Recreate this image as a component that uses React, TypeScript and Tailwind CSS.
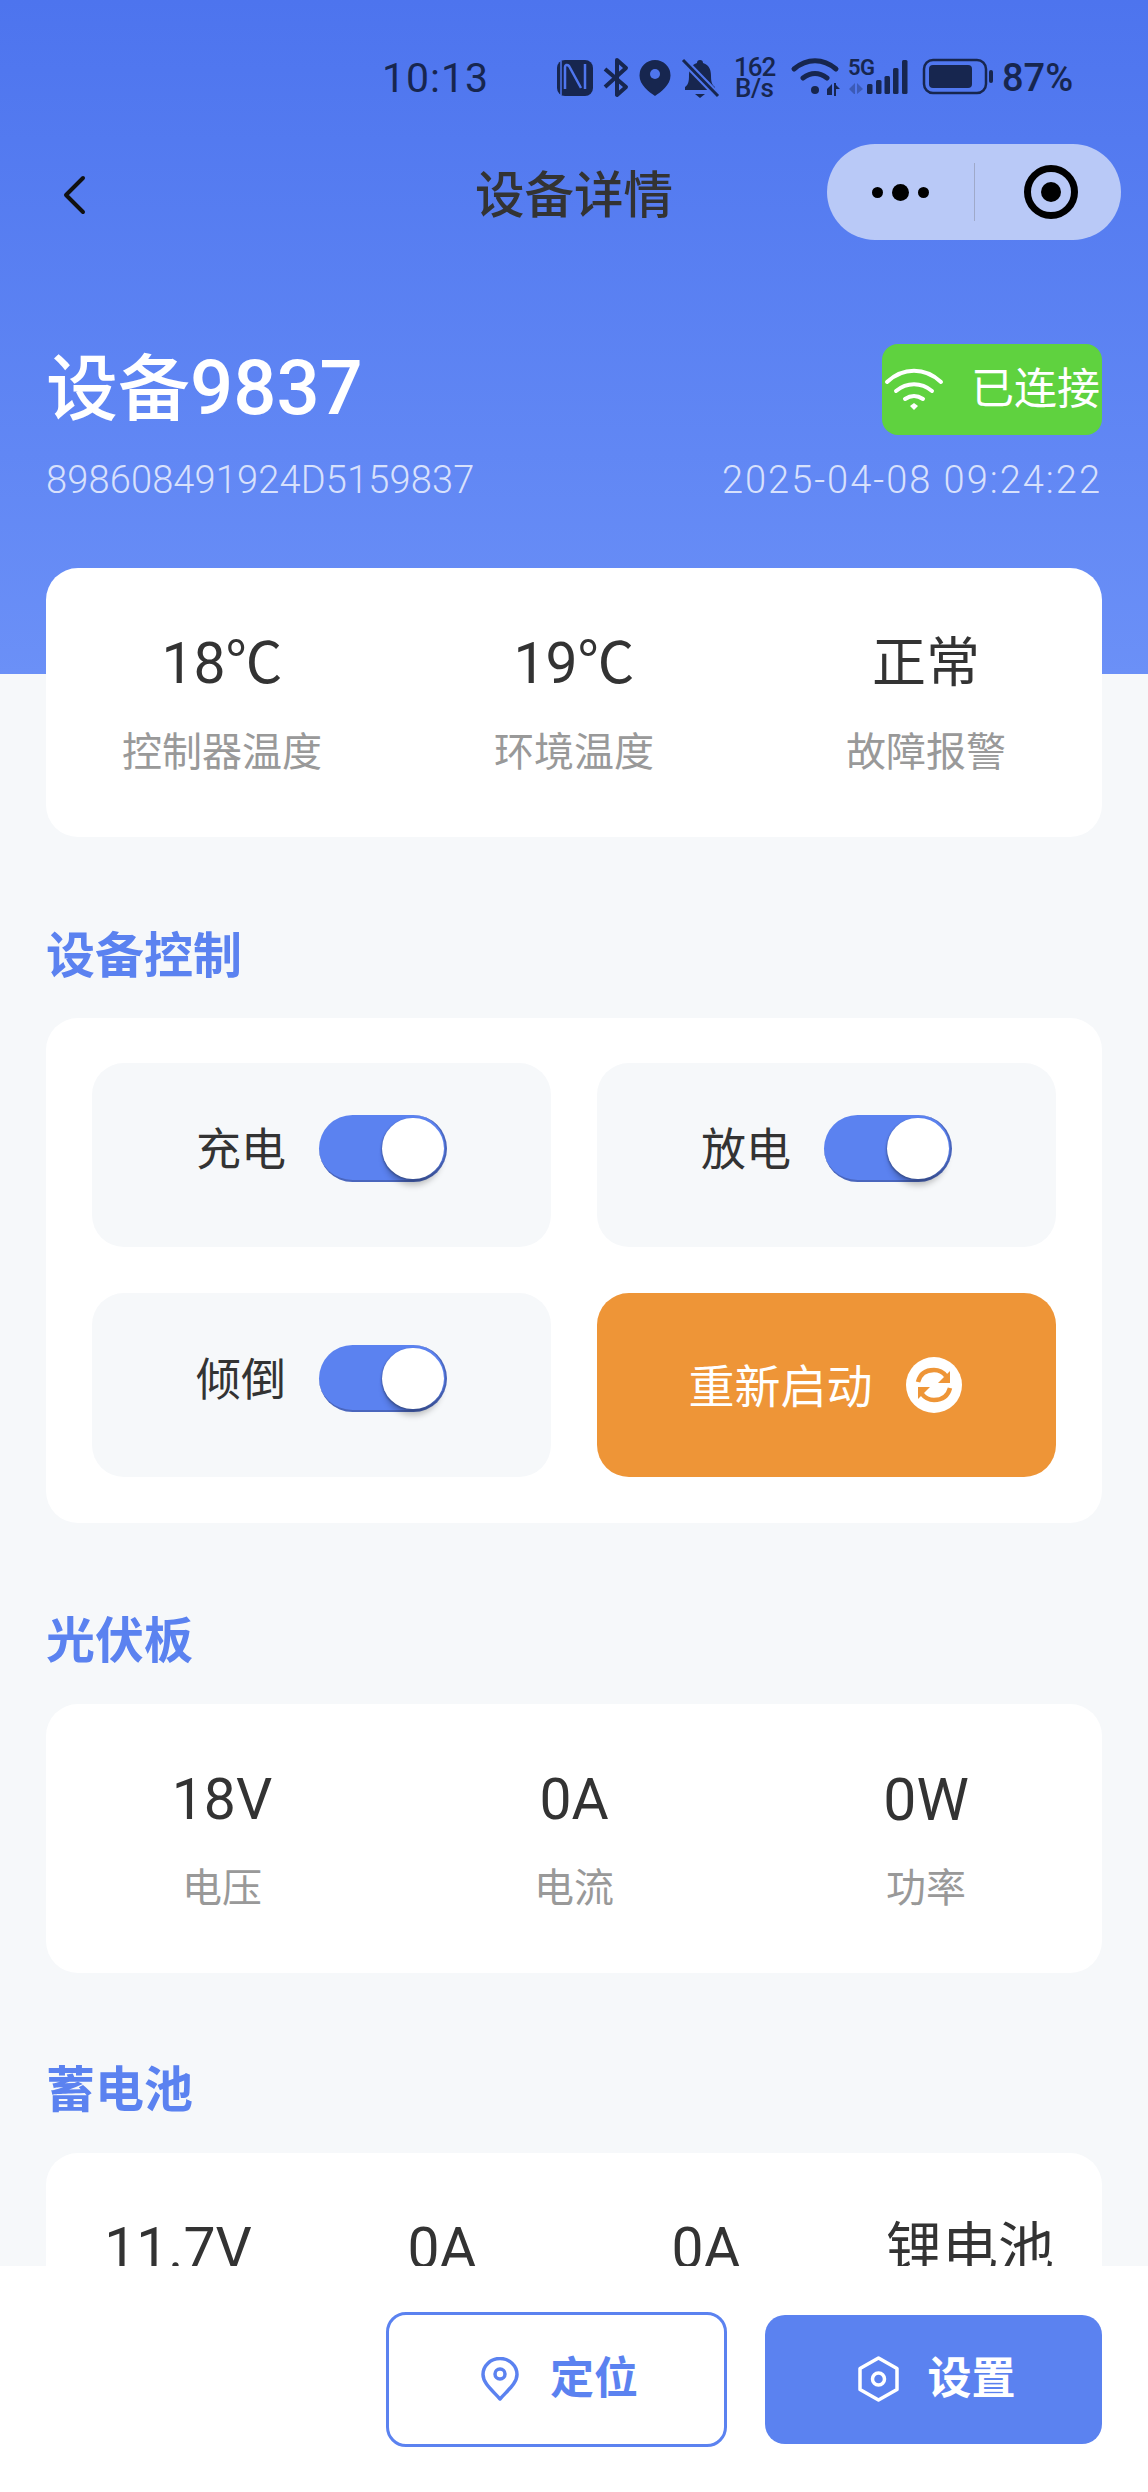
import type { ReactNode } from 'react';

const FONT = "font-[Roboto,'Noto_Sans_CJK_SC',sans-serif]";

const pvStats = [
  { value: '18V', label: '电压', size: 'text-[57px]' },
  { value: '0A', label: '电流', size: 'text-[57px]' },
  { value: '0W', label: '功率', size: 'text-[59px]' },
];

const tempStats = [
  { value: '18℃', label: '控制器温度', size: 'text-[57px]' },
  { value: '19℃', label: '环境温度', size: 'text-[57px]' },
  { value: '正常', label: '故障报警', size: 'text-[54px]' },
];

const batteryStats = [
  { value: '11.7V', size: 'text-[57px]' },
  { value: '0A', size: 'text-[57px]' },
  { value: '0A', size: 'text-[57px]' },
  { value: '锂电池', size: 'text-[56px]' },
];

function StatusIcons() {
  const ink = '#17264f';
  return (
    <svg width="517" height="44" viewBox="0 0 517 44" className="block">
      {/* nfc */}
      <rect x="0" y="4" width="36" height="36" rx="8" fill={ink} />
      <path d="M8 33V11c0-2 2-3 4-1l12 22" fill="none" stroke="#4f76ee" strokeWidth="2.500" />
      <path d="M28 8v25" fill="none" stroke="#4f76ee" strokeWidth="2.500" />
      <path d="M4 5v34" fill="none" stroke="#4f76ee" strokeWidth="1.500" />
      {/* bluetooth */}
      <path d="M48 13l21 18-9 8V4l9 8-21 19" fill="none" stroke={ink} strokeWidth="4" strokeLinejoin="round" />
      {/* location */}
      <path d="M98 4a15.500 15.500 0 0 1 15.500 15.500C113.500 29 104 36 98 40c-6-4-15.500-11-15.500-20.500A15.500 15.500 0 0 1 98 4z" fill={ink} />
      <circle cx="98" cy="18" r="5" fill="#4f76ee" />
      {/* muted bell */}
      <path d="M140 7a3 3 0 0 1 6 0c7 2 8 8 8 13 0 6 1 9 4 11v3h-30v-3c3-2 4-5 4-11 0-5 1-11 8-13z" fill={ink} />
      <path d="M138 38h10l-5 4z" fill={ink} />
      <path d="M127 5l33 34" stroke="#4f76ee" strokeWidth="7" />
      <path d="M126 4l35 36" stroke={ink} strokeWidth="3" />
      {/* wifi */}
      <path d="M237 13c13-11 29-11 42 0" fill="none" stroke={ink} strokeWidth="5" strokeLinecap="round" />
      <path d="M246 22c8-6 16-6 24 0" fill="none" stroke={ink} strokeWidth="5" strokeLinecap="round" />
      <circle cx="258" cy="34" r="4" fill={ink} />
      <path d="M270 33l5-5v11h-5zM277 27h2v13h-2zM279 29l4 4h-4z" fill={ink} />
      {/* cellular */}
      <path d="M292 33l6-6v11h-1zM300 27l6 6-6 5z" fill={ink} opacity=".35" />
      <rect x="310" y="28" width="5.500" height="10" rx="1.500" fill={ink} />
      <rect x="319" y="24" width="5.500" height="14" rx="1.500" fill={ink} />
      <rect x="327.500" y="20" width="5.500" height="18" rx="1.500" fill={ink} />
      <rect x="336" y="12" width="5.500" height="26" rx="1.500" fill={ink} />
      <rect x="345" y="4" width="5.500" height="34" rx="1.500" fill={ink} />
      {/* battery */}
      <rect x="367" y="4" width="62" height="33" rx="9" fill="none" stroke={ink} strokeWidth="2.500" />
      <rect x="372" y="9" width="43" height="23" rx="4" fill={ink} />
      <rect x="432" y="14" width="4" height="13" rx="2" fill={ink} />
    </svg>
  );
}

function StatusBar() {
  return (
    <div className="relative flex h-[144px] items-start pl-[382px] pt-[56px] text-[#17264f]">
      <span className="w-[175px] text-[41px] leading-[44px] tracking-[1px]">10:13</span>
      <div className="relative">
        <StatusIcons />
        <span className="absolute left-[177px] top-[1px] text-[26px] font-medium leading-[21px] tracking-[-1px]">162</span>
        <span className="absolute left-[178px] top-[22px] text-[26px] font-medium leading-[21px] tracking-[-0.5px]">B/s</span>
        <span className="absolute left-[291px] top-[2px] text-[22px] font-semibold leading-[20px] tracking-[-0.5px]">5G</span>
        <span className="absolute left-[445px] top-[0px] text-[38px] font-medium leading-[44px]">87%</span>
      </div>
    </div>
  );
}

function NavBar() {
  return (
    <div className="grid h-[96px] grid-cols-[1fr_auto_1fr] items-center">
      <div className="pl-[60px] pt-[6px]">
        <svg width="28" height="40" viewBox="0 0 28 40" fill="none" stroke="#111" strokeWidth="4" strokeLinecap="round" strokeLinejoin="round">
          <path d="M23 3L6 20l17 17" />
        </svg>
      </div>
      <h1 className="pt-[8px] text-[49.500px] font-medium leading-[60px] text-[#333]">设备详情</h1>
      <div className="flex justify-end pr-[27px]">
        <div className="flex h-[96px] w-[294px] items-center rounded-full bg-[#b9c9f7]">
          <div className="flex w-[147px] items-center justify-center gap-[9px]">
            <span className="h-[11px] w-[11px] rounded-full bg-black" />
            <span className="h-[17px] w-[17px] rounded-full bg-black" />
            <span className="h-[11px] w-[11px] rounded-full bg-black" />
          </div>
          <div className="h-[58px] w-px bg-[#9fa9c9]" />
          <div className="flex flex-1 items-center justify-center pl-[5px]">
            <div className="flex h-[54px] w-[54px] items-center justify-center rounded-full border-[7px] border-black">
              <span className="h-[20px] w-[20px] rounded-full bg-black" />
            </div>
          </div>
        </div>
      </div>
    </div>
  );
}

function WifiIcon() {
  return (
    <svg width="60" height="44" viewBox="0 0 60 44" fill="none" stroke="#fff" strokeWidth="4" strokeLinecap="round">
      <path d="M3 15c16-15 38-15 54 0" />
      <path d="M12 24c11-9 25-9 36 0" />
      <path d="M21 32c6-4 12-4 18 0" />
      <path d="M26 39l4-3 4 3-4 4z" fill="#fff" stroke="none" />
    </svg>
  );
}

function Toggle() {
  return (
    <span className="relative block h-[67px] w-[128px] rounded-full border-r-[2px] border-b-[2px] border-[#4a66bd] bg-[#5b82f0]">
      <span className="absolute right-[1px] top-[3px] h-[61px] w-[62px] rounded-full bg-white shadow-[-1px_1px_2px_rgba(0,0,0,0.25),0_9px_6px_-3px_rgba(0,0,0,0.25)]" />
    </span>
  );
}

function ToggleCell({ label }: { label: string }) {
  return (
    <div className="flex h-[184px] items-center justify-center gap-[33px] rounded-[32px] bg-[#f6f8fa] pb-[14px]">
      <span className="pt-[6px] text-[45px] leading-[56px] text-[#333]">{label}</span>
      <Toggle />
    </div>
  );
}

function RestartIcon() {
  return (
    <svg width="56" height="56" viewBox="0 0 56 56">
      <circle cx="28" cy="28" r="28" fill="#fff" />
      <path d="M12 25c2-8 8-12 16-12 5 0 9 2 12 6" fill="none" stroke="#ee9537" strokeWidth="4.500" />
      <path d="M44 14v12H32z" fill="#ee9537" />
      <path d="M44 31c-2 8-8 12-16 12-5 0-9-2-12-6" fill="none" stroke="#ee9537" strokeWidth="4.500" />
      <path d="M12 42V30h12z" fill="#ee9537" />
    </svg>
  );
}

function Card({ className, children }: { className: string; children: ReactNode }) {
  return <div className={`mx-[46px] rounded-[32px] bg-white ${className}`}>{children}</div>;
}

function SectionTitle({ children, className }: { children: ReactNode; className: string }) {
  return <h2 className={`ml-[46px] text-[49px] font-bold leading-[60px] text-[#5b82f0] ${className}`}>{children}</h2>;
}

function StatCard({ stats, className }: { stats: { value: string; label: string; size: string }[]; className: string }) {
  return (
    <Card className={`grid h-[269px] grid-cols-3 pt-[64px] ${className}`}>
      {stats.map((s) => (
        <div key={s.label} className="flex flex-col items-center">
          <span className={`${s.size} leading-[64px] text-[#333]`}>{s.value}</span>
          <span className="mt-[33px] text-[40px] leading-[48px] text-[#999]">{s.label}</span>
        </div>
      ))}
    </Card>
  );
}

export default function App() {
  return (
    <div className={`flex h-[2492px] w-[1148px] flex-col overflow-hidden bg-[#f6f8fa] ${FONT}`}>
      <main className="min-h-0 flex-1 overflow-hidden">
        <header className="h-[674px] bg-gradient-to-b from-[#4d74ee] to-[#6b90f7]">
          <StatusBar />
          <NavBar />
          <div className="mt-[103px] flex items-center justify-between px-[46px]">
            <span className="text-[72px] font-medium leading-[91px] text-white">
              设备<span className="text-[76px]">9837</span>
            </span>
            <div className="flex h-[91px] w-[220px] items-center rounded-[16px] bg-[#5fd23f] pl-[2px]">
              <WifiIcon />
              <span className="ml-[27px] whitespace-nowrap text-[43px] leading-[50px] text-white">已连接</span>
            </div>
          </div>
          <div className="mt-[23px] flex justify-between px-[46px] text-[38px] font-light leading-[44px] text-white/75">
            <span className="tracking-[0.15px]">898608491924D5159837</span>
            <span className="tracking-[2px]">2025-04-08 09:24:22</span>
          </div>
        </header>

        <StatCard stats={tempStats} className="relative -mt-[106px]" />

        <SectionTitle className="mt-[90px]">设备控制</SectionTitle>
        <Card className="mt-[31px] grid grid-cols-2 gap-[46px] px-[46px] pb-[46px] pt-[45px]">
          <ToggleCell label="充电" />
          <ToggleCell label="放电" />
          <ToggleCell label="倾倒" />
          <div className="flex h-[184px] items-center justify-center gap-[33px] rounded-[32px] bg-[#ee9537] pr-[3px]">
            <span className="pt-[4px] text-[46px] leading-[56px] text-white">重新启动</span>
            <RestartIcon />
          </div>
        </Card>

        <SectionTitle className="mt-[89px]">光伏板</SectionTitle>
        <StatCard stats={pvStats} className="mt-[32px]" />

        <SectionTitle className="mt-[88px]">蓄电池</SectionTitle>
        <Card className="mt-[32px] grid h-[268px] grid-cols-4 pt-[64px]">
          {batteryStats.map((s, i) => (
            <div key={i} className={`text-center ${s.size} leading-[64px] text-[#333]`}>{s.value}</div>
          ))}
        </Card>
      </main>

      <footer className="flex h-[226px] shrink-0 items-center justify-end gap-[38px] bg-white pr-[46px]">
        <button className="flex h-[135px] w-[341px] items-center justify-center gap-[31px] rounded-[20px] border-[3px] border-[#5b82f0] bg-white pl-[6px] text-[44px] font-bold text-[#5b82f0]">
          <svg width="38" height="44" viewBox="0 0 38 44" fill="none" stroke="#5b82f0" strokeWidth="3.500">
            <path d="M19 42C11 33 2 26 2 17.500A17 16 0 0 1 36 17.500C36 26 27 33 19 42z" strokeLinejoin="round" />
            <circle cx="19" cy="17" r="5" />
          </svg>
          定位
        </button>
        <button className="flex h-[129px] w-[337px] items-center justify-center gap-[29px] rounded-[20px] bg-[#5b82f0] pl-[6px] text-[44px] font-bold text-white">
          <svg width="41" height="46" viewBox="0 0 41 46" fill="none" stroke="#fff" strokeWidth="3.500" strokeLinejoin="round">
            <path d="M20.500 2L39 12.500v21L20.500 44 2 33.500v-21z" />
            <circle cx="20.500" cy="23" r="6" />
          </svg>
          设置
        </button>
      </footer>
    </div>
  );
}
